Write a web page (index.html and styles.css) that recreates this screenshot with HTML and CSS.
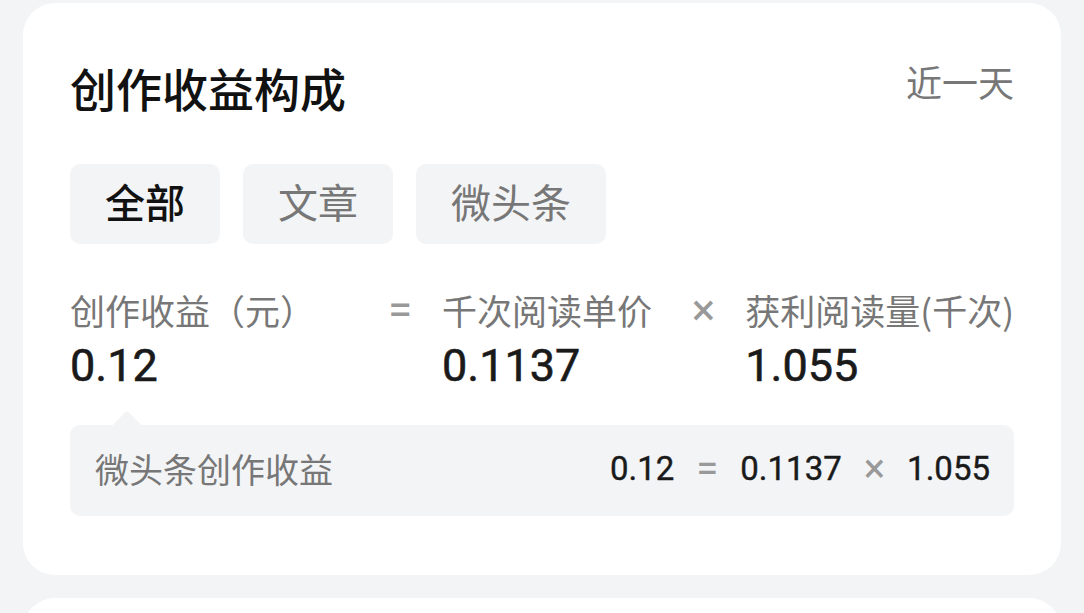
FILE: index.html
```html
<!DOCTYPE html>
<html lang="zh-CN">
<head>
    <meta charset="UTF-8">
    <meta name="viewport" content="width=device-width, initial-scale=1.0">
    <title>创作收益构成</title>
    <link rel="stylesheet" href="styles.css">
</head>
<body>
    <div class="card">
        <div class="header">
            <h1>创作收益构成</h1>
            <span class="range">近一天</span>
        </div>
        <div class="tabs">
            <button class="tab active">全部</button>
            <button class="tab">文章</button>
            <button class="tab">微头条</button>
        </div>
        <div class="formula">
            <div class="col col-first">
                <div class="label">创作收益（元）</div>
                <div class="value">0.12</div>
            </div>
            <div class="op">=</div>
            <div class="col col-second">
                <div class="label">千次阅读单价</div>
                <div class="value">0.1137</div>
            </div>
            <div class="op">×</div>
            <div class="col col-last">
                <div class="label">获利阅读量(千次)</div>
                <div class="value">1.055</div>
            </div>
        </div>
        <div class="detail">
            <span class="detail-name">微头条创作收益</span>
            <div class="detail-calc">
                <span class="num">0.12</span>
                <span class="sign">=</span>
                <span class="num">0.1137</span>
                <span class="sign">×</span>
                <span class="num">1.055</span>
            </div>
        </div>
    </div>
    <div class="card card-next"></div>
</body>
</html>
```

FILE: styles.css
```css
body {
    margin: 0;
    padding: 3px 23px 0;
    background-color: #f3f4f6;
    font-family: "Noto Sans CJK SC", "Noto Sans", sans-serif;
    overflow: hidden;
}
.card {
    background: white;
    border-radius: 32px;
    padding: 56px 47px 59px;
}
.card-next {
    margin-top: 23px;
    height: 200px;
    padding: 0;
}
.header {
    display: flex;
    justify-content: space-between;
    align-items: flex-start;
}
h1 {
    margin: 0;
    font-size: 46px;
    line-height: 56px;
    font-weight: 500;
    color: #111;
}
.range {
    font-size: 36px;
    line-height: 44px;
    color: #777;
}
.tabs {
    display: flex;
    gap: 23px;
    margin-top: 49px;
}
.tab {
    height: 80px;
    padding: 0 35px 6px;
    border: none;
    border-radius: 10px;
    background-color: #f3f4f6;
    font-family: inherit;
    font-size: 40px;
    color: #777;
}
.tab.active {
    color: #111;
    font-weight: 500;
}
.formula {
    display: flex;
    gap: 30px;
    margin-top: 44px;
}
.col-first {
    width: 290px;
}
.col-second {
    width: 221px;
}
.col-last {
    flex: 1;
    white-space: nowrap;
}
.label {
    font-size: 35px;
    line-height: 44px;
    color: #777;
}
.value {
    margin-top: 9px;
    font-family: Roboto, "Noto Sans", sans-serif;
    font-size: 45px;
    line-height: 50px;
    font-weight: 400;
    color: #1a1a1a;
    -webkit-text-stroke: 0.6px #1a1a1a;
}
.op {
    width: 24px;
    font-family: Roboto, sans-serif;
    font-size: 44px;
    line-height: 44px;
    color: #999;
    text-align: center;
}
.detail {
    position: relative;
    display: flex;
    justify-content: space-between;
    align-items: center;
    box-sizing: border-box;
    height: 91px;
    margin-top: 34px;
    padding: 0 24px 4px 25px;
    border-radius: 10px;
    background-color: #f3f4f6;
}
.detail::before {
    content: "";
    position: absolute;
    top: -10px;
    left: 46px;
    width: 22px;
    height: 22px;
    background-color: #f3f4f6;
    border-radius: 4px;
    transform: rotate(45deg);
}
.detail-name {
    font-size: 34px;
    color: #777;
}
.detail-calc {
    display: flex;
    align-items: center;
    gap: 22px;
    font-family: Roboto, sans-serif;
}
.num {
    font-size: 33px;
    font-weight: 400;
    color: #1a1a1a;
    -webkit-text-stroke: 0.4px #1a1a1a;
}
.sign {
    font-size: 40px;
    color: #999;
}
```
